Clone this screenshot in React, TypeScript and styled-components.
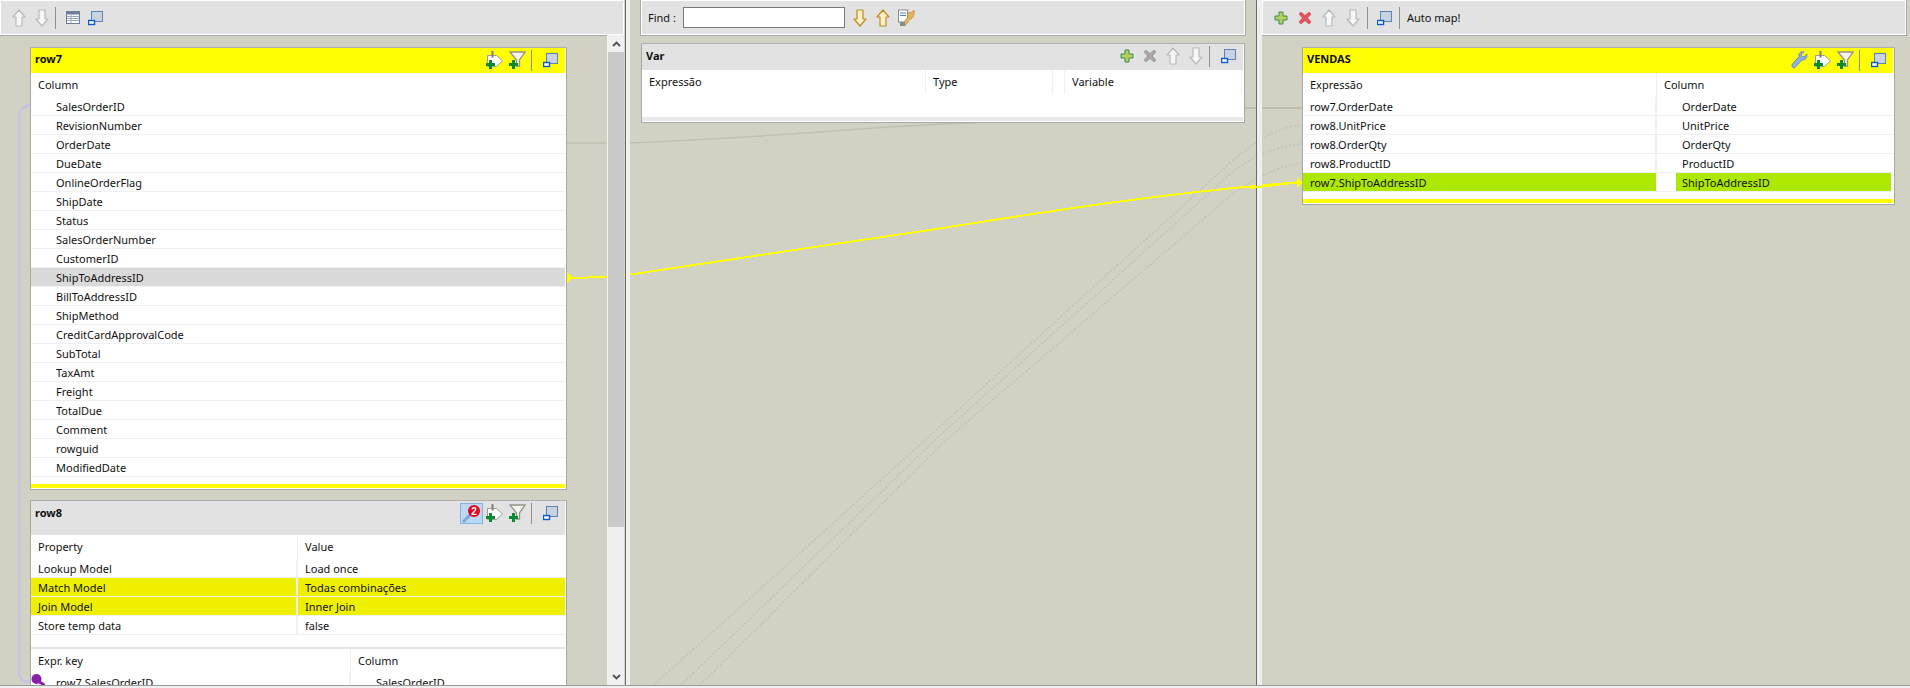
import React from 'react';
import styled, { createGlobalStyle } from 'styled-components';

const GlobalStyle = createGlobalStyle`
	html, body {
		margin: 0;
		padding: 0;
		background: #d1d2c3;
		overflow: hidden;
	}
	body {
		font-family: 'Noto Sans', 'Liberation Sans', sans-serif;
		font-size: 11px;
		color: #111;
	}
`;

const CANVAS = '#d1d2c3';
const BAR = '#e2e2e2';
const LINE = '#eef0f4';

const Page = styled.div`
	position: relative;
	width: 1910px;
	height: 688px;
	overflow: hidden;
	background: #f0f0f0;
`;

const Zones = styled.div`
	position: relative;
	display: flex;
	height: 685px;
	border-bottom: 1px solid #9a9a9a;
	box-sizing: content-box;
`;

const Zone = styled.div<{ $w: number }>`
	display: flex;
	flex-direction: column;
	flex: 0 0 ${(p) => p.$w}px;
	width: ${(p) => p.$w}px;
	min-width: 0;
	overflow: hidden;
`;

const Sash = styled.div<{ $w: number; $pad?: number }>`
	flex: 0 0 ${(p) => p.$w}px;
	background: #f0f0f0;
	border-left: 1px solid #6b6b6b;
	box-sizing: border-box;
	z-index: 2;
	margin-left: ${(p) => p.$pad ?? 0}px;
`;

const Toolbar = styled.div<{ $ml?: number; $mr?: number }>`
	display: flex;
	align-items: center;
	flex: 0 0 35px;
	height: 35px;
	box-sizing: border-box;
	margin-left: ${(p) => p.$ml ?? 0}px;
	margin-right: ${(p) => p.$mr ?? 0}px;
	background: ${BAR};
	border: 1px solid #fff;
	box-shadow: 0 0 0 1px #a9a9a9;
	position: relative;
	z-index: 2;
`;

const ToolSlot = styled.span<{ $w?: number }>`
	display: flex;
	align-items: center;
	justify-content: center;
	flex: 0 0 ${(p) => p.$w ?? 23}px;
	width: ${(p) => p.$w ?? 23}px;
	height: 22px;
`;

const ToolSep = styled.span`
	flex: 0 0 1px;
	height: 22px;
	margin: 0 5px 0 2px;
	background: #8f8f8f;
`;

const Label = styled.span<{ $ml?: number }>`
	margin-left: ${(p) => p.$ml ?? 0}px;
	white-space: nowrap;
`;

const FindInput = styled.div`
	width: 162px;
	height: 21px;
	box-sizing: border-box;
	margin: 0 4px 0 7px;
	background: #fff;
	border: 1px solid #7a7a7a;
`;

const Body = styled.div`
	display: flex;
	flex: 1;
	min-height: 0;
	background: transparent;
`;

const TableColumn = styled.div<{ $pl: number; $pt: number }>`
	display: flex;
	flex-direction: column;
	gap: 10px;
	flex: 1;
	min-width: 0;
	padding: ${(p) => p.$pt}px 0 0 ${(p) => p.$pl}px;
	position: relative;
	z-index: 1;
`;

const Scrollbar = styled.div`
	display: flex;
	flex-direction: column;
	justify-content: space-between;
	flex: 0 0 17px;
	box-sizing: border-box;
	background: #f0f0f0;
	border-left: 1px solid #f4f4f4;
	position: relative;
	z-index: 2;
`;

const ScrollButton = styled.div`
	display: flex;
	align-items: center;
	justify-content: center;
	height: 17px;
	color: #505050;
`;

const ScrollThumb = styled.div`
	flex: 0 0 475px;
	background: #c9c9c9;
`;

const ScrollRest = styled.div`
	flex: 1;
`;

const Card = styled.div<{ $w: number; $clip?: number }>`
	flex: 0 0 auto;
	width: ${(p) => p.$w}px;
	box-sizing: border-box;
	background: #fff;
	border: 1px solid #a7a7a7;
	border-top-color: #b0b0b0;
	padding: 0 1px 1px 0;
	${(p) => (p.$clip ? `height: ${p.$clip}px; overflow: hidden; border-bottom: 0;` : '')}
`;

const CardHead = styled.div<{ $active?: boolean; $h: number }>`
	display: flex;
	justify-content: space-between;
	align-items: flex-start;
	height: ${(p) => p.$h}px;
	box-sizing: border-box;
	background: ${(p) => (p.$active ? '#ffff00' : BAR)};
`;

const CardTitle = styled.span<{ $active?: boolean }>`
	padding: ${(p) => (p.$active ? 3 : 4)}px 0 0 4px;
	font-weight: 700;
	line-height: 16px;
`;

const CardTools = styled.div`
	display: flex;
	align-items: center;
	height: 22px;
	margin-top: 1px;
	padding-right: 3px;
`;

const HeadRow = styled.div<{ $cols: string; $h?: number }>`
	display: grid;
	grid-template-columns: ${(p) => p.$cols};
	height: ${(p) => p.$h ?? 24}px;
`;

const HeadCell = styled.div<{ $sep?: boolean }>`
	padding-left: 7px;
	line-height: 24px;
	white-space: nowrap;
	box-sizing: border-box;
	border-right: ${(p) => (p.$sep ? `1px solid ${LINE}` : '0')};
`;

const Row = styled.div<{ $cols: string; $hl?: boolean }>`
	display: grid;
	grid-template-columns: ${(p) => p.$cols};
	height: 19px;
	box-sizing: border-box;
	border-bottom: 1px solid ${LINE};
	${(p) => (p.$hl ? 'background: #dadada;' : '')}
`;

const Cell = styled.div<{ $tone?: string; $indent?: number; $sep?: boolean }>`
	padding-left: ${(p) => p.$indent ?? 7}px;
	line-height: 20px;
	height: 18px;
	white-space: nowrap;
	box-sizing: border-box;
	border-right: ${(p) => (p.$sep ? `2px solid ${LINE}` : '0')};
	background: ${(p) => p.$tone ?? 'transparent'};
`;

const GreenCell = styled.div<{ $inset: string; $indent: number }>`
	margin: ${(p) => p.$inset};
	padding-left: ${(p) => p.$indent}px;
	line-height: 20px;
	height: 18px;
	background: #ade800;
	white-space: nowrap;
`;

const Foot = styled.div<{ $gap: number; $tone: string }>`
	margin-top: ${(p) => p.$gap}px;
	height: 4px;
	background: ${(p) => p.$tone};
`;

const Divider = styled.div`
	height: 2px;
	margin-top: 12px;
	background: #e4e4e4;
`;

const KeyMark = styled.svg`
	position: absolute;
	left: 0;
	top: 1px;
`;

const KeyRow = styled.div`
	position: relative;
`;

const Links = styled.svg`
	position: absolute;
	left: 0;
	top: 0;
	z-index: 0;
	pointer-events: none;
`;

const CanvasBack = styled.div`
	position: absolute;
	inset: 0 0 3px 0;
	background: ${CANVAS};
`;

const FrontLinks = styled.svg`
	position: absolute;
	left: 0;
	top: 0;
	z-index: 3;
	pointer-events: none;
`;

/* icons */
const UpArrow = ({ tone = '#b9b9b9', fill = '#f7f7f7' }: { tone?: string; fill?: string }) => (
	<svg width="14" height="18" viewBox="0 0 14 18">
		<path d="M7 1 13 8H10V17H4V8H1Z" fill={fill} stroke={tone} strokeWidth="1.2" strokeLinejoin="round" />
	</svg>
);

const DownArrow = ({ tone = '#b9b9b9', fill = '#f7f7f7' }: { tone?: string; fill?: string }) => (
	<svg width="14" height="18" viewBox="0 0 14 18">
		<path d="M4 1H10V10H13L7 17 1 10H4Z" fill={fill} stroke={tone} strokeWidth="1.2" strokeLinejoin="round" />
	</svg>
);

const WindowIcon = () => (
	<svg width="16" height="16" viewBox="0 0 16 16">
		<rect x="3.5" y="1.5" width="11" height="10" fill="#c9d3e0" stroke="#5b83b8" />
		<rect x="0.5" y="10.5" width="6" height="4" fill="#fff" stroke="#0a58d0" strokeWidth="1.4" />
	</svg>
);

const TableIcon = () => (
	<svg width="14" height="13" viewBox="0 0 14 13">
		<rect x="0.5" y="0.5" width="13" height="12" fill="#fff" stroke="#6d7f9d" />
		<rect x="1" y="1" width="12" height="2.5" fill="#6d7f9d" />
		<path d="M1 5.5H13M1 7.5H13M1 9.5H13M5 4V12" stroke="#9aa8bf" />
	</svg>
);

const PlusIcon = () => (
	<svg width="14" height="14" viewBox="0 0 14 14">
		<path d="M5 1H9V5H13V9H9V13H5V9H1V5H5Z" fill="#b4d05e" stroke="#3f8a5a" />
	</svg>
);

const CrossIcon = ({ tone, edge }: { tone: string; edge: string }) => (
	<svg width="14" height="14" viewBox="0 0 14 14">
		<path d="M3 1 7 4.5 11 1 13 3 9.5 7 13 11 11 13 7 9.5 3 13 1 11 4.5 7 1 3Z" fill={tone} stroke={edge} strokeWidth="0.6" />
	</svg>
);

const GreenPlus = () => <path d="M3 9H6V12H9V15H6V18H3V15H0V12H3Z" fill="#0a8a34" />;

const AddOutput = () => (
	<svg width="18" height="18" viewBox="0 0 18 18">
		<path d="M1.500 4.500H10.500L16.500 10 10.500 15.500H1.500Z" fill="#fff" stroke="#9f9f8f" />
		<path d="M6.500 0V6.500" stroke="#7f7f7f" strokeWidth="2" />
		<GreenPlus />
	</svg>
);

const AddFilter = () => (
	<svg width="17" height="18" viewBox="0 0 17 18">
		<path d="M1 1H16L10.500 9V15H7.500V9Z" fill="#f2f2f2" stroke="#959585" strokeWidth="1.300" />
		<GreenPlus />
	</svg>
);

const Wrench = () => (
	<svg width="17" height="18" viewBox="0 0 17 18">
		<path d="M16 3 13 6 10.500 5 10.500 2.500 13 1C10 0 7.500 2 8 5.500L1.500 13C0 15 2 18 4 16.500L11 9C14 9.500 16.500 7 16 3Z" fill="#8fb0d8" stroke="#6f8fb5" />
	</svg>
);

const FindOptions = () => (
	<svg width="17" height="18" viewBox="0 0 17 18">
		<rect x="0.500" y="1" width="9" height="12" fill="#fff" stroke="#8a8a8a" />
		<path d="M2 4H8M2 6.500H8" stroke="#5a7fc0" />
		<path d="M16 1 13 4 11 3C8.500 5 9 7 10 8L5 14 7 17 12 10C15 10 17 6 16 1Z" fill="#e2b25c" stroke="#b88a30" strokeWidth="0.600" />
		<rect x="2" y="13" width="5" height="4" fill="#8a8a8a" />
	</svg>
);

const SearchBadge = () => (
	<svg width="21" height="19" viewBox="0 0 21 19">
		<path d="M3 17 11 9" stroke="#7ea4d8" strokeWidth="3" strokeLinecap="round" />
		<circle cx="13" cy="7" r="6" fill="#e8061c" />
		<text x="13" y="10.500" fontSize="10" fontWeight="700" fill="#fff" textAnchor="middle" fontFamily="Liberation Sans">2</text>
	</svg>
);

const SearchButton = styled.span`
	display: flex;
	align-items: center;
	justify-content: center;
	width: 23px;
	height: 21px;
	box-sizing: border-box;
	background: #bcd8f2;
	border: 1px solid #82b3e2;
`;

const CardSep = styled.span`
	flex: 0 0 1px;
	height: 21px;
	margin: 0 7px 0 2px;
	background: #8f8f8f;
`;

const ScrollUp = () => (
	<svg width="9" height="6" viewBox="0 0 9 6">
		<path d="M1 5 4.500 1.500 8 5" fill="none" stroke="currentColor" strokeWidth="1.800" />
	</svg>
);

const ScrollDown = () => (
	<svg width="9" height="6" viewBox="0 0 9 6">
		<path d="M1 1 4.500 4.500 8 1" fill="none" stroke="currentColor" strokeWidth="1.800" />
	</svg>
);

const row7Columns = [
	'SalesOrderID',
	'RevisionNumber',
	'OrderDate',
	'DueDate',
	'OnlineOrderFlag',
	'ShipDate',
	'Status',
	'SalesOrderNumber',
	'CustomerID',
	'ShipToAddressID',
	'BillToAddressID',
	'ShipMethod',
	'CreditCardApprovalCode',
	'SubTotal',
	'TaxAmt',
	'Freight',
	'TotalDue',
	'Comment',
	'rowguid',
	'ModifiedDate',
];

const lookupProps = [
	['Lookup Model', 'Load once', false],
	['Match Model', 'Todas combinações', true],
	['Join Model', 'Inner Join', true],
	['Store temp data', 'false', false],
] as const;

const outputRows = [
	['row7.OrderDate', 'OrderDate'],
	['row8.UnitPrice', 'UnitPrice'],
	['row8.OrderQty', 'OrderQty'],
	['row8.ProductID', 'ProductID'],
];

const App = () => {
	const vendasCols = '354px 1fr';
	return (
		<Page>
			<GlobalStyle />
			<CanvasBack />
			<Links width="1910" height="685">
				<path d="M19 640V118Q19 106 31 105" fill="none" stroke="#c9c2e2" strokeWidth="2.500" />
				<path d="M19 640V672Q19 682 31 682" fill="none" stroke="#c9c2e2" strokeWidth="2.500" />
				<path d="M566 143H630C800 136 880 125 977 123" fill="none" stroke="#bfc0b0" strokeWidth="1.500" />
				<path d="M1245 108H1302" fill="none" stroke="#bfc0b0" strokeWidth="2" />
				<g fill="none" stroke="#c2c3b4" strokeWidth="1.500" strokeDasharray="2 2">
					<path d="M654 685 925 440 1230 163C1260 137 1280 127 1302 125" />
					<path d="M681 685 935 440 1235 170C1260 152 1280 146 1302 144" />
					<path d="M700 685 946 440 1235 192C1260 175 1280 166 1302 163" />
				</g>
				<path d="M570 278 606 277 627 275C720 262 830 244 930 230C1050 211 1170 192 1302 182" fill="none" stroke="#ffff00" strokeWidth="2" shapeRendering="crispEdges" />
				<path d="M567 272 573 277.500 567 283Z" fill="#ffff00" />
			</Links>
			<Zones>
				<Zone $w={624}>
					<Toolbar>
						<ToolSlot $w={6} />
						<ToolSlot><UpArrow /></ToolSlot>
						<ToolSlot><DownArrow /></ToolSlot>
						<ToolSep />
						<ToolSlot><TableIcon /></ToolSlot>
						<ToolSlot><WindowIcon /></ToolSlot>
					</Toolbar>
					<Body>
						<TableColumn $pl={30} $pt={12}>
							<Card $w={537}>
								<CardHead $active $h={25}>
									<CardTitle $active>row7</CardTitle>
									<CardTools>
										<ToolSlot><AddOutput /></ToolSlot>
										<ToolSlot><AddFilter /></ToolSlot>
										<CardSep />
										<ToolSlot><WindowIcon /></ToolSlot>
									</CardTools>
								</CardHead>
								<HeadRow $cols="1fr">
									<HeadCell>Column</HeadCell>
								</HeadRow>
								{row7Columns.map((name) => (
									<Row key={name} $cols="1fr" $hl={name === 'ShipToAddressID'}>
										<Cell $indent={25}>{name}</Cell>
									</Row>
								))}
								<Foot $gap={7} $tone="#ffff00" />
							</Card>
							<Card $w={537} $clip={185}>
								<CardHead $h={34}>
									<CardTitle>row8</CardTitle>
									<CardTools>
										<SearchButton><SearchBadge /></SearchButton>
										<ToolSlot><AddOutput /></ToolSlot>
										<ToolSlot><AddFilter /></ToolSlot>
										<CardSep />
										<ToolSlot><WindowIcon /></ToolSlot>
									</CardTools>
								</CardHead>
								<HeadRow $cols="267px 1fr">
									<HeadCell $sep>Property</HeadCell>
									<HeadCell>Value</HeadCell>
								</HeadRow>
								{lookupProps.map(([name, value, hl]) => (
									<Row key={name} $cols="267px 1fr">
										<Cell $tone={hl ? '#efef00' : undefined} $sep>{name}</Cell>
										<Cell $tone={hl ? '#efef00' : undefined}>{value}</Cell>
									</Row>
								))}
								<Divider />
								<HeadRow $cols="320px 1fr">
									<HeadCell $sep>Expr. key</HeadCell>
									<HeadCell>Column</HeadCell>
								</HeadRow>
								<KeyRow>
									<KeyMark width="14" height="12" viewBox="0 0 14 12">
										<circle cx="5.500" cy="5" r="5" fill="#8a1fa8" />
										<path d="M7 7 12.500 10.500" stroke="#8a1fa8" strokeWidth="3" strokeLinecap="round" />
									</KeyMark>
									<Row $cols="320px 1fr">
										<Cell $indent={25} $sep>row7.SalesOrderID</Cell>
										<Cell $indent={25}>SalesOrderID</Cell>
									</Row>
								</KeyRow>
							</Card>
						</TableColumn>
						<Scrollbar>
							<ScrollButton><ScrollUp /></ScrollButton>
							<ScrollThumb />
							<ScrollRest />
							<ScrollButton><ScrollDown /></ScrollButton>
						</Scrollbar>
					</Body>
				</Zone>
				<Sash $w={5} $pad={1} />
				<Zone $w={626}>
					<Toolbar $ml={11} $mr={11}>
						<Label $ml={6}>Find :</Label>
						<FindInput />
						<ToolSlot><DownArrow tone="#c08a20" fill="#fdf0c8" /></ToolSlot>
						<ToolSlot><UpArrow tone="#c08a20" fill="#fdf0c8" /></ToolSlot>
						<ToolSlot><FindOptions /></ToolSlot>
					</Toolbar>
					<Body>
						<TableColumn $pl={11} $pt={8}>
							<Card $w={604}>
								<CardHead $h={26}>
									<CardTitle>Var</CardTitle>
									<CardTools>
										<ToolSlot><PlusIcon /></ToolSlot>
										<ToolSlot><CrossIcon tone="#a6a6a6" edge="#909090" /></ToolSlot>
										<ToolSlot><UpArrow /></ToolSlot>
										<ToolSlot><DownArrow /></ToolSlot>
										<CardSep />
										<ToolSlot><WindowIcon /></ToolSlot>
									</CardTools>
								</CardHead>
								<HeadRow $cols="284px 127px 12px 177px">
									<HeadCell $sep>Expressão</HeadCell>
									<HeadCell $sep>Type</HeadCell>
									<HeadCell $sep />
									<HeadCell $sep>Variable</HeadCell>
								</HeadRow>
								<Foot $gap={23} $tone="#e9e9e9" />
							</Card>
						</TableColumn>
					</Body>
				</Zone>
				<Sash $w={6} />
				<Zone $w={648}>
					<Toolbar $mr={4}>
						<ToolSlot $w={6} />
						<ToolSlot $w={24}><PlusIcon /></ToolSlot>
						<ToolSlot $w={24}><CrossIcon tone="#e8505f" edge="#c83a48" /></ToolSlot>
						<ToolSlot $w={24}><UpArrow /></ToolSlot>
						<ToolSlot $w={24}><DownArrow /></ToolSlot>
						<ToolSep />
						<ToolSlot $w={24}><WindowIcon /></ToolSlot>
						<ToolSep />
						<Label $ml={2}>Auto map!</Label>
					</Toolbar>
					<Body>
						<TableColumn $pl={40} $pt={12}>
							<Card $w={593}>
								<CardHead $active $h={25}>
									<CardTitle $active>VENDAS</CardTitle>
									<CardTools>
										<ToolSlot><Wrench /></ToolSlot>
										<ToolSlot><AddOutput /></ToolSlot>
										<ToolSlot><AddFilter /></ToolSlot>
										<CardSep />
										<ToolSlot><WindowIcon /></ToolSlot>
									</CardTools>
								</CardHead>
								<HeadRow $cols={vendasCols}>
									<HeadCell $sep>Expressão</HeadCell>
									<HeadCell>Column</HeadCell>
								</HeadRow>
								{outputRows.map(([expr, col]) => (
									<Row key={col} $cols={vendasCols}>
										<Cell $sep>{expr}</Cell>
										<Cell $indent={25}>{col}</Cell>
									</Row>
								))}
								<Row $cols={vendasCols}>
									<GreenCell $inset="0 1px 0 0" $indent={7}>row7.ShipToAddressID</GreenCell>
									<GreenCell $inset="0 2px 0 19px" $indent={6}>ShipToAddressID</GreenCell>
								</Row>
								<Foot $gap={7} $tone="#ffff00" />
							</Card>
						</TableColumn>
					</Body>
				</Zone>
			</Zones>
			<FrontLinks width="1910" height="685">
				<path d="M1250 188 1302 182" fill="none" stroke="#ffff00" strokeWidth="2" shapeRendering="crispEdges" />
				<path d="M1297 177 1303 182.500 1297 188Z" fill="#ffff00" />
			</FrontLinks>
		</Page>
	);
};

export default App;
